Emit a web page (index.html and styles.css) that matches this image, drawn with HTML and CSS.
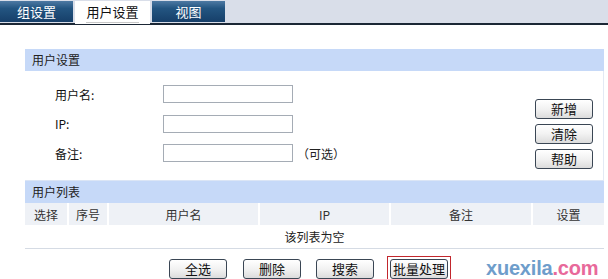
FILE: index.html
```html
<!DOCTYPE html>
<html lang="zh-CN">
<head>
    <meta charset="UTF-8">
    <title>用户设置</title>
    <link rel="stylesheet" href="styles.css">
</head>
<body>

<div class="tabbar">
    <a href="#" class="tab">组设置</a>
    <a href="#" class="tab active"><span>用户设置</span></a>
    <a href="#" class="tab">视图</a>
</div>

<div class="content">
    <div class="panel-title">用户设置</div>
    <div class="form-area">
        <div class="form">
            <div class="form-row">
                <label for="user-name">用户名:</label>
                <input type="text" id="user-name">
            </div>
            <div class="form-row">
                <label for="user-ip">IP:</label>
                <input type="text" id="user-ip">
            </div>
            <div class="form-row">
                <label for="user-note">备注:</label>
                <input type="text" id="user-note">
                <span class="hint">（可选）</span>
            </div>
        </div>
        <div class="side-buttons">
            <button class="btn">新增</button>
            <button class="btn">清除</button>
            <button class="btn">帮助</button>
        </div>
    </div>

    <div class="panel-title list-title">用户列表</div>
    <table class="user-table">
        <thead>
            <tr>
                <th class="c-sel">选择</th>
                <th class="c-no">序号</th>
                <th class="c-name">用户名</th>
                <th class="c-ip">IP</th>
                <th class="c-note">备注</th>
                <th>设置</th>
            </tr>
        </thead>
        <tbody>
            <tr>
                <td colspan="6">该列表为空</td>
            </tr>
        </tbody>
    </table>

    <div class="bottom-bar">
        <button class="btn">全选</button>
        <button class="btn">删除</button>
        <button class="btn">搜索</button>
        <span class="marked"><button class="btn">批量处理</button></span>
        <span class="watermark">xuexila<em>.com</em></span>
    </div>
</div>

</body>
</html>
```

FILE: styles.css
```css
/* 页面 */
body {
    margin: 0;
    background: #fff;
    font-family: "Noto Sans CJK SC", "Liberation Sans", sans-serif;
    font-size: 12px;
    color: #222;
}

/* 标签栏 */
.tabbar {
    display: flex;
    height: 22px;
    background-color: #d9dee9;
    border-bottom: 2px solid #1b2735;
    padding-top: 1px;
    box-sizing: content-box;
}
.tab {
    width: 73px;
    height: 21px;
    margin-right: 2px;
    color: #fff;
    text-decoration: none;
    font-size: 13px;
    line-height: 21px;
    text-align: center;
    background: linear-gradient(to bottom, #4d79a3 0, #235581 35%, #163f69 100%);
}
.tab.active {
    width: 75px;
    height: 23px;
    margin-bottom: -2px;
    background: #fff;
    color: #111;
}
.tab.active span {
    border-bottom: 1px solid #c8c8c8;
    padding-bottom: 1px;
}

/* 内容 */
.content {
    padding: 24px 4px 0 25px;
}
.panel-title {
    height: 22px;
    line-height: 22px;
    padding-left: 7px;
    background-color: #c6d9f8;
    color: #222;
}
.form-area {
    display: flex;
    height: 109px;
    border-right: 1px solid #e2e9f4;
    border-bottom: 1px solid #dbe5f5;
}
.form {
    padding-top: 14px;
}
.form-row {
    display: flex;
    align-items: center;
    height: 18px;
    margin-bottom: 11.5px;
}
.form-row label {
    width: 108px;
    padding-left: 30px;
    font-size: 12px;
    color: #111;
}
.form-row input {
    width: 130px;
    height: 18px;
    box-sizing: border-box;
    border: 1px solid #a5acb5;
    padding: 0 3px;
    margin: 0;
}
.hint {
    margin-left: 4px;
}
.side-buttons {
    margin-left: auto;
    padding: 28px 10px 0 0;
    display: flex;
    flex-direction: column;
    gap: 5px;
}

/* 按钮 */
.btn {
    width: 58px;
    height: 20px;
    padding: 0;
    border: 1px solid #3a4654;
    border-radius: 3px;
    background: linear-gradient(to bottom, #ffffff 0, #f2f2f2 50%, #dcdcdc 100%);
    font-family: "Noto Sans CJK SC", sans-serif;
    font-size: 13px;
    line-height: 18px;
    color: #111;
}
.marked {
    display: flex;
    margin: -3px;
    padding: 2px;
    border: 1px solid #c2272d;
}

/* 列表 */
.list-title {
    height: 22px;
}
.user-table {
    width: 579px;
    border-collapse: collapse;
    border-bottom: 1px solid #d5dbe4;
}
.user-table th {
    height: 22px;
    padding: 0;
    background-color: #eef1f6;
    border-left: 2px solid #fff;
    font-weight: normal;
    color: #333;
}
.user-table th:first-child {
    border-left: none;
}
.user-table td {
    height: 23px;
    padding: 0;
    text-align: center;
}
.c-sel { width: 42px; }
.c-no { width: 38px; }
.c-name { width: 149px; }
.c-ip { width: 129px; }
.c-note { width: 140px; }

.bottom-bar {
    display: flex;
    align-items: center;
    gap: 16px;
    padding: 8px 0 0 144px;
}
.bottom-bar .btn:nth-child(3) {
    margin-left: -1px;
}
.watermark {
    margin-left: 22px;
    font-family: "Liberation Sans", Arial, sans-serif;
    font-weight: bold;
    font-size: 20px;
    color: #6e9dcb;
    letter-spacing: -0.2px;
}
.watermark em {
    font-style: normal;
    color: #e8699a;
}
```
